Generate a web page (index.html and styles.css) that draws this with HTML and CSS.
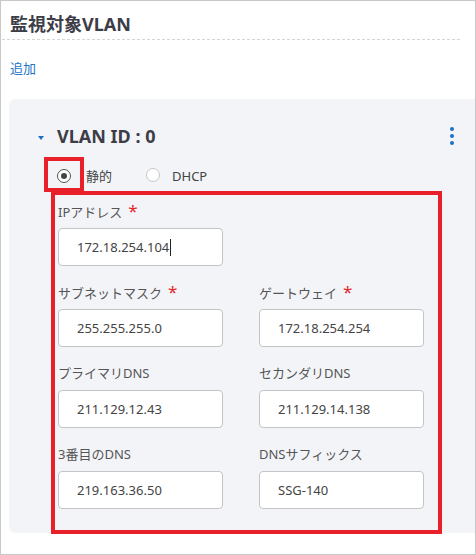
FILE: index.html
```html
<!DOCTYPE html>
<html lang="ja">
<head>
  <meta charset="UTF-8">
  <title>監視対象VLAN</title>
  <link rel="stylesheet" href="styles.css">
</head>
<body>
  <div class="frame">
    <h2 class="title">監視対象VLAN</h2>
    <div class="divider"></div>
    <a class="add-link" href="#">追加</a>

    <div class="panel">
      <div class="panel-header">
        <div class="panel-title">
          <span class="caret"></span>
          <span>VLAN ID : 0</span>
        </div>
        <div class="kebab">
          <span></span><span></span><span></span>
        </div>
      </div>

      <div class="radio-row">
        <div class="mark">
          <span class="radio checked"></span>
        </div>
        <span class="radio-label">静的</span>
        <span class="radio"></span>
        <span class="radio-label">DHCP</span>
      </div>

      <div class="form-box">
        <div class="field">
          <div class="label">IPアドレス<span class="req">*</span></div>
          <div class="input">172.18.254.104<span class="cursor"></span></div>
        </div>
        <div class="field"></div>

        <div class="field">
          <div class="label">サブネットマスク<span class="req">*</span></div>
          <div class="input">255.255.255.0</div>
        </div>
        <div class="field">
          <div class="label">ゲートウェイ<span class="req">*</span></div>
          <div class="input">172.18.254.254</div>
        </div>

        <div class="field">
          <div class="label">プライマリDNS</div>
          <div class="input">211.129.12.43</div>
        </div>
        <div class="field">
          <div class="label">セカンダリDNS</div>
          <div class="input">211.129.14.138</div>
        </div>

        <div class="field">
          <div class="label">3番目のDNS</div>
          <div class="input">219.163.36.50</div>
        </div>
        <div class="field">
          <div class="label">DNSサフィックス</div>
          <div class="input">SSG-140</div>
        </div>
      </div>
    </div>
  </div>
</body>
</html>
```

FILE: styles.css
```css
* {
  margin: 0;
  padding: 0;
  box-sizing: border-box;
}

body {
  font-family: "Noto Sans", "Noto Sans CJK JP", sans-serif;
  background: #fff;
  color: #444;
}

.frame {
  width: 476px;
  height: 555px;
  border: 1px solid #c8c8c8;
  padding-left: 8px;
  overflow: hidden;
}

.title {
  padding: 11px 0 0 1px;
  font-size: 18px;
  line-height: 24px;
  font-weight: bold;
  color: #3d3d47;
}

.divider {
  margin: 3px 0 0 -7px;
  width: 460px;
  height: 1px;
  background: repeating-linear-gradient(to right, #d6d6d6 0 3px, transparent 3px 5px);
}

.add-link {
  display: block;
  margin: 18px 0 0 1px;
  font-size: 13px;
  line-height: 20px;
  color: #2474c6;
  text-decoration: none;
}

.panel {
  margin-top: 21px;
  background: #f3f4f8;
  border-radius: 6px 0 0 6px;
  padding: 24px 21px 0 29px;
  height: 434px;
}

.panel-header {
  display: flex;
  justify-content: space-between;
  align-items: center;
  height: 26px;
}

.panel-title {
  display: flex;
  align-items: center;
  gap: 13px;
  font-size: 18px;
  font-weight: bold;
  color: #3d3d47;
}

.caret {
  width: 0;
  height: 0;
  margin-top: 3px;
  border-left: 3.5px solid transparent;
  border-right: 3.5px solid transparent;
  border-top: 4px solid #1f6fc5;
}

.kebab {
  display: flex;
  flex-direction: column;
  gap: 3px;
}

.kebab span {
  width: 4px;
  height: 4px;
  border-radius: 50%;
  background: #1f6fc5;
}

.radio-row {
  display: flex;
  align-items: center;
  margin-top: 8px;
  font-size: 13px;
}

.mark {
  display: flex;
  align-items: center;
  justify-content: center;
  width: 40px;
  height: 35px;
  margin-left: 6px;
  border: 4px solid #e8202a;
}

.radio {
  display: inline-block;
  width: 14px;
  height: 14px;
  border: 1px solid #c6c6c6;
  border-radius: 50%;
  background: #fff;
  position: relative;
}

.radio.checked {
  border: 1.5px solid #555;
  margin-top: 3px;
}

.radio.checked::after {
  content: "";
  position: absolute;
  left: 2.5px;
  top: 2.5px;
  width: 6px;
  height: 6px;
  border-radius: 50%;
  background: #444;
}

.radio-label {
  margin: 2px 34px 0 2px;
  color: #444;
}

.radio-label + .radio {
  margin-left: 0;
}

.radio + .radio-label {
  margin-left: 12px;
}

.mark + .radio-label {
  margin-left: 2px;
}

.form-box {
  margin: -1px 0 0 13px;
  width: 391px;
  border: 4px solid #e8202a;
  padding: 6px 14px 21px 3px;
  display: grid;
  grid-template-columns: 165px 165px;
  column-gap: 36px;
  row-gap: 16px;
}

.label {
  font-size: 13px;
  line-height: 20px;
  height: 20px;
  margin-bottom: 7px;
  color: #555;
}

.req {
  margin-left: 6px;
  font-size: 17px;
  color: #e3262a;
}

.input {
  height: 38px;
  border: 1px solid #c4c4c4;
  border-radius: 4px;
  background: #fff;
  padding-left: 18px;
  font-size: 13px;
  line-height: 36px;
  color: #444;
}

.cursor {
  display: inline-block;
  width: 1px;
  height: 17px;
  margin-left: 1px;
  vertical-align: -4px;
  background: #222;
}
```
